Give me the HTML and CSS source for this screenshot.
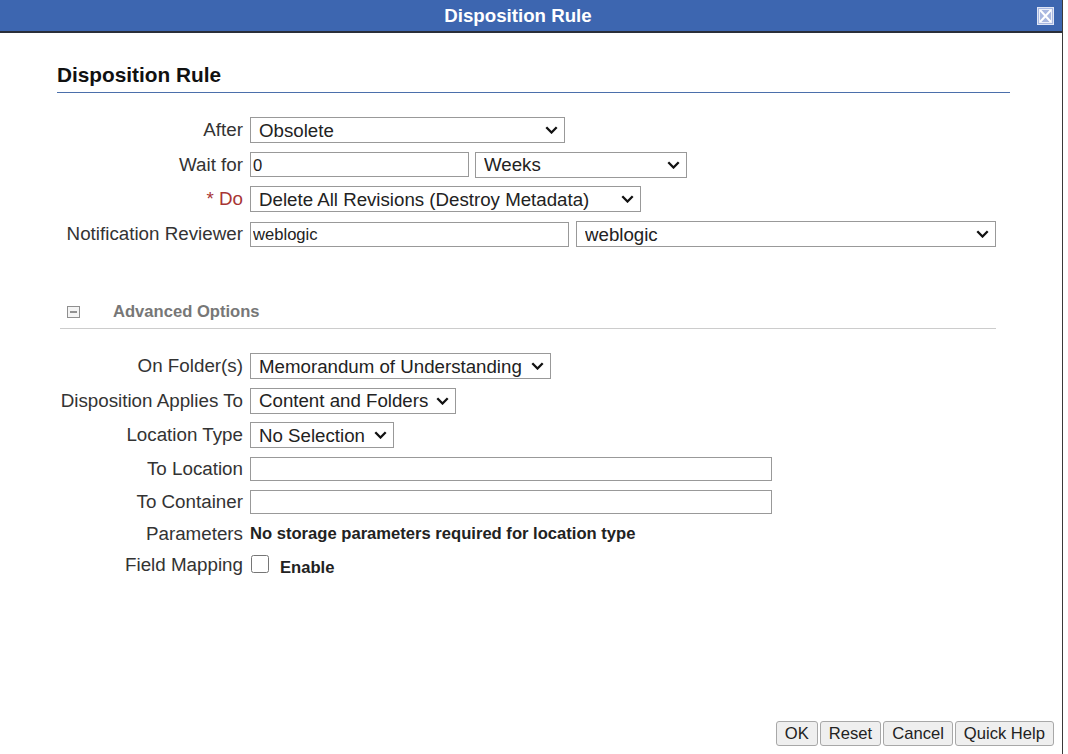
FILE: index.html
```html
<!DOCTYPE html>
<html>
<head>
<meta charset="utf-8">
<title>Disposition Rule</title>
<link rel="stylesheet" href="styles.css">
</head>
<body>
<div class="dialog">
  <div class="titlebar">
    <span class="title">Disposition Rule</span>
    <span class="close" aria-label="Close">
      <svg width="17" height="18" viewBox="0 0 17 18">
        <rect x="0.5" y="0.5" width="16" height="17" fill="#a9b8e0" stroke="#dfe5f5"/>
        <path d="M3 3 L14 15 M14 3 L3 15" stroke="#ffffff" stroke-width="2"/>
        <rect x="2.5" y="2.5" width="12" height="13" fill="none" stroke="#eef1fa" stroke-width="1"/>
      </svg>
    </span>
  </div>

  <div class="content">
    <h2 class="heading">Disposition Rule</h2>

    <div class="form form-main">
      <label class="lbl">After</label>
      <div class="ctl">
        <span class="selwrap">
          <select class="sel w-after"><option>Obsolete</option></select>
          <svg class="chev" width="13" height="8" viewBox="0 0 13 8"><path d="M1.3 1.3 L6.5 6.5 L11.7 1.3" fill="none" stroke="#111" stroke-width="2.3"/></svg>
        </span>
      </div>

      <label class="lbl">Wait for</label>
      <div class="ctl">
        <input class="txt w-wait" type="text" value="0">
        <span class="selwrap gap6">
          <select class="sel w-weeks"><option>Weeks</option></select>
          <svg class="chev" width="13" height="8" viewBox="0 0 13 8"><path d="M1.3 1.3 L6.5 6.5 L11.7 1.3" fill="none" stroke="#111" stroke-width="2.3"/></svg>
        </span>
      </div>

      <label class="lbl req">* Do</label>
      <div class="ctl">
        <span class="selwrap">
          <select class="sel w-do"><option>Delete All Revisions (Destroy Metadata)</option></select>
          <svg class="chev" width="13" height="8" viewBox="0 0 13 8"><path d="M1.3 1.3 L6.5 6.5 L11.7 1.3" fill="none" stroke="#111" stroke-width="2.3"/></svg>
        </span>
      </div>

      <label class="lbl">Notification Reviewer</label>
      <div class="ctl">
        <input class="txt w-rev" type="text" value="weblogic">
        <span class="selwrap gap7">
          <select class="sel w-revsel"><option>weblogic</option></select>
          <svg class="chev" width="13" height="8" viewBox="0 0 13 8"><path d="M1.3 1.3 L6.5 6.5 L11.7 1.3" fill="none" stroke="#111" stroke-width="2.3"/></svg>
        </span>
      </div>
    </div>

    <div class="adv-header">
      <svg class="adv-icon" width="13" height="12" viewBox="0 0 13 12">
        <rect x="0.5" y="0.5" width="12" height="11" fill="#f4f4f4" stroke="#8f8f8f"/>
        <path d="M3 6 H10" stroke="#666" stroke-width="1.4"/>
      </svg>
      <span class="adv-title">Advanced Options</span>
    </div>

    <div class="form form-adv">
      <label class="lbl">On Folder(s)</label>
      <div class="ctl">
        <span class="selwrap">
          <select class="sel w-folder"><option>Memorandum of Understanding</option></select>
          <svg class="chev" width="13" height="8" viewBox="0 0 13 8"><path d="M1.3 1.3 L6.5 6.5 L11.7 1.3" fill="none" stroke="#111" stroke-width="2.3"/></svg>
        </span>
      </div>

      <label class="lbl">Disposition Applies To</label>
      <div class="ctl">
        <span class="selwrap">
          <select class="sel w-applies"><option>Content and Folders</option></select>
          <svg class="chev" width="13" height="8" viewBox="0 0 13 8"><path d="M1.3 1.3 L6.5 6.5 L11.7 1.3" fill="none" stroke="#111" stroke-width="2.3"/></svg>
        </span>
      </div>

      <label class="lbl">Location Type</label>
      <div class="ctl">
        <span class="selwrap">
          <select class="sel w-loctype"><option>No Selection</option></select>
          <svg class="chev" width="13" height="8" viewBox="0 0 13 8"><path d="M1.3 1.3 L6.5 6.5 L11.7 1.3" fill="none" stroke="#111" stroke-width="2.3"/></svg>
        </span>
      </div>

      <label class="lbl">To Location</label>
      <div class="ctl">
        <input class="txt w-loc" type="text" value="">
      </div>

      <label class="lbl">To Container</label>
      <div class="ctl">
        <input class="txt w-loc" type="text" value="">
      </div>

      <label class="lbl">Parameters</label>
      <div class="ctl ctl-short">
        <span class="bold-text">No storage parameters required for location type</span>
      </div>

      <label class="lbl">Field Mapping</label>
      <div class="ctl">
        <input class="chk" type="checkbox">
        <span class="bold-text enable">Enable</span>
      </div>
    </div>
  </div>

  <div class="footer">
    <button class="btn">OK</button>
    <button class="btn">Reset</button>
    <button class="btn">Cancel</button>
    <button class="btn">Quick Help</button>
  </div>
</div>
</body>
</html>
```

FILE: styles.css
```css
html, body {
  margin: 0;
  padding: 0;
  background: #ffffff;
}

body {
  font-family: "Liberation Sans", Arial, sans-serif;
  color: #333333;
  width: 1068px;
  height: 754px;
  overflow: hidden;
}

.dialog {
  width: 1062px;
  height: 754px;
  border-right: 1px solid #3a3a3a;
  display: flex;
  flex-direction: column;
  background: #ffffff;
}

.titlebar {
  height: 31px;
  background: #3d66b0;
  border-bottom: 2px solid #2a2f3a;
  display: flex;
  align-items: center;
  justify-content: center;
  padding-right: 26px;
  position: relative;
}

.title {
  color: #ffffff;
  font-weight: bold;
  font-size: 18.7px;
}

.close {
  position: absolute;
  left: 1037px;
  top: 7px;
  width: 17px;
  height: 18px;
  display: block;
}

.close svg {
  display: block;
}

.content {
  flex: 1;
  padding: 30px 52px 0 57px;
}

.heading {
  margin: 0;
  font-size: 20.8px;
  line-height: 24px;
  font-weight: bold;
  color: #111111;
  padding-bottom: 5px;
  border-bottom: 1px solid #4b6fab;
}

.form {
  display: grid;
  grid-template-columns: 186px 1fr;
  column-gap: 7px;
  row-gap: 8.7px;
  align-items: center;
}

.form-main {
  margin-top: 24px;
}

.form-adv {
  margin-top: 24px;
}

.lbl {
  text-align: right;
  font-size: 18.8px;
  color: #333333;
  white-space: nowrap;
  line-height: 22px;
}

.lbl.req {
  color: #a83535;
}

.ctl {
  display: flex;
  align-items: center;
  min-height: 24px;
}

.ctl-short {
  min-height: 18px;
}

.selwrap {
  position: relative;
  display: inline-flex;
  flex: none;
}

.gap6 { margin-left: 6px; }
.gap7 { margin-left: 7px; }

.chev {
  position: absolute;
  right: 7px;
  top: 9px;
  pointer-events: none;
  display: block;
}

.sel {
  -webkit-appearance: none;
  appearance: none;
  box-sizing: border-box;
  height: 26px;
  font-family: "Liberation Sans", Arial, sans-serif;
  font-size: 18.7px;
  color: #222222;
  background: #ffffff;
  border: 1px solid #999999;
  border-radius: 0;
  padding: 0 24px 0 8px;
  margin: 0;
  outline: none;
}

.txt {
  box-sizing: border-box;
  height: 24px;
  font-family: "Liberation Sans", Arial, sans-serif;
  font-size: 16.6px;
  color: #222222;
  background: #ffffff;
  border: 1px solid #999999;
  border-radius: 0;
  padding: 2px 2px 0 2px;
  margin: 0;
  outline: none;
}

.w-after { width: 315px; }
.w-wait { width: 219px; height: 25px; }
.w-weeks { width: 212px; }
.w-do { width: 391px; }
.w-rev { width: 319px; height: 25px; }
.w-revsel { width: 420px; }
.w-folder { width: 301px; }
.w-applies { width: 206px; }
.w-loctype { width: 144px; }
.w-loc { width: 522px; }

.adv-header {
  margin: 55px 14px 0 3px;
  height: 20px;
  padding-bottom: 6px;
  padding-left: 7px;
  border-bottom: 1px solid #cccccc;
  display: flex;
  align-items: center;
}

.adv-icon {
  display: block;
  flex: none;
}

.adv-title {
  margin-left: 33px;
  font-size: 16.6px;
  font-weight: bold;
  color: #777777;
}

.bold-text {
  font-size: 16.6px;
  font-weight: bold;
  color: #222222;
  line-height: 18px;
}

.chk {
  width: 18px;
  height: 18px;
  margin: 0 0 2px 1px;
}

.enable {
  margin-left: 11px;
  margin-top: 5px;
}

.footer {
  display: flex;
  justify-content: flex-end;
  gap: 2px;
  padding: 0 8px 8px 0;
}

.btn {
  box-sizing: border-box;
  height: 25px;
  font-family: "Liberation Sans", Arial, sans-serif;
  font-size: 16.6px;
  color: #222222;
  background: #efefef;
  border: 1px solid #a8a8a8;
  border-radius: 3px;
  padding: 0 8px;
  margin: 0;
}
```
